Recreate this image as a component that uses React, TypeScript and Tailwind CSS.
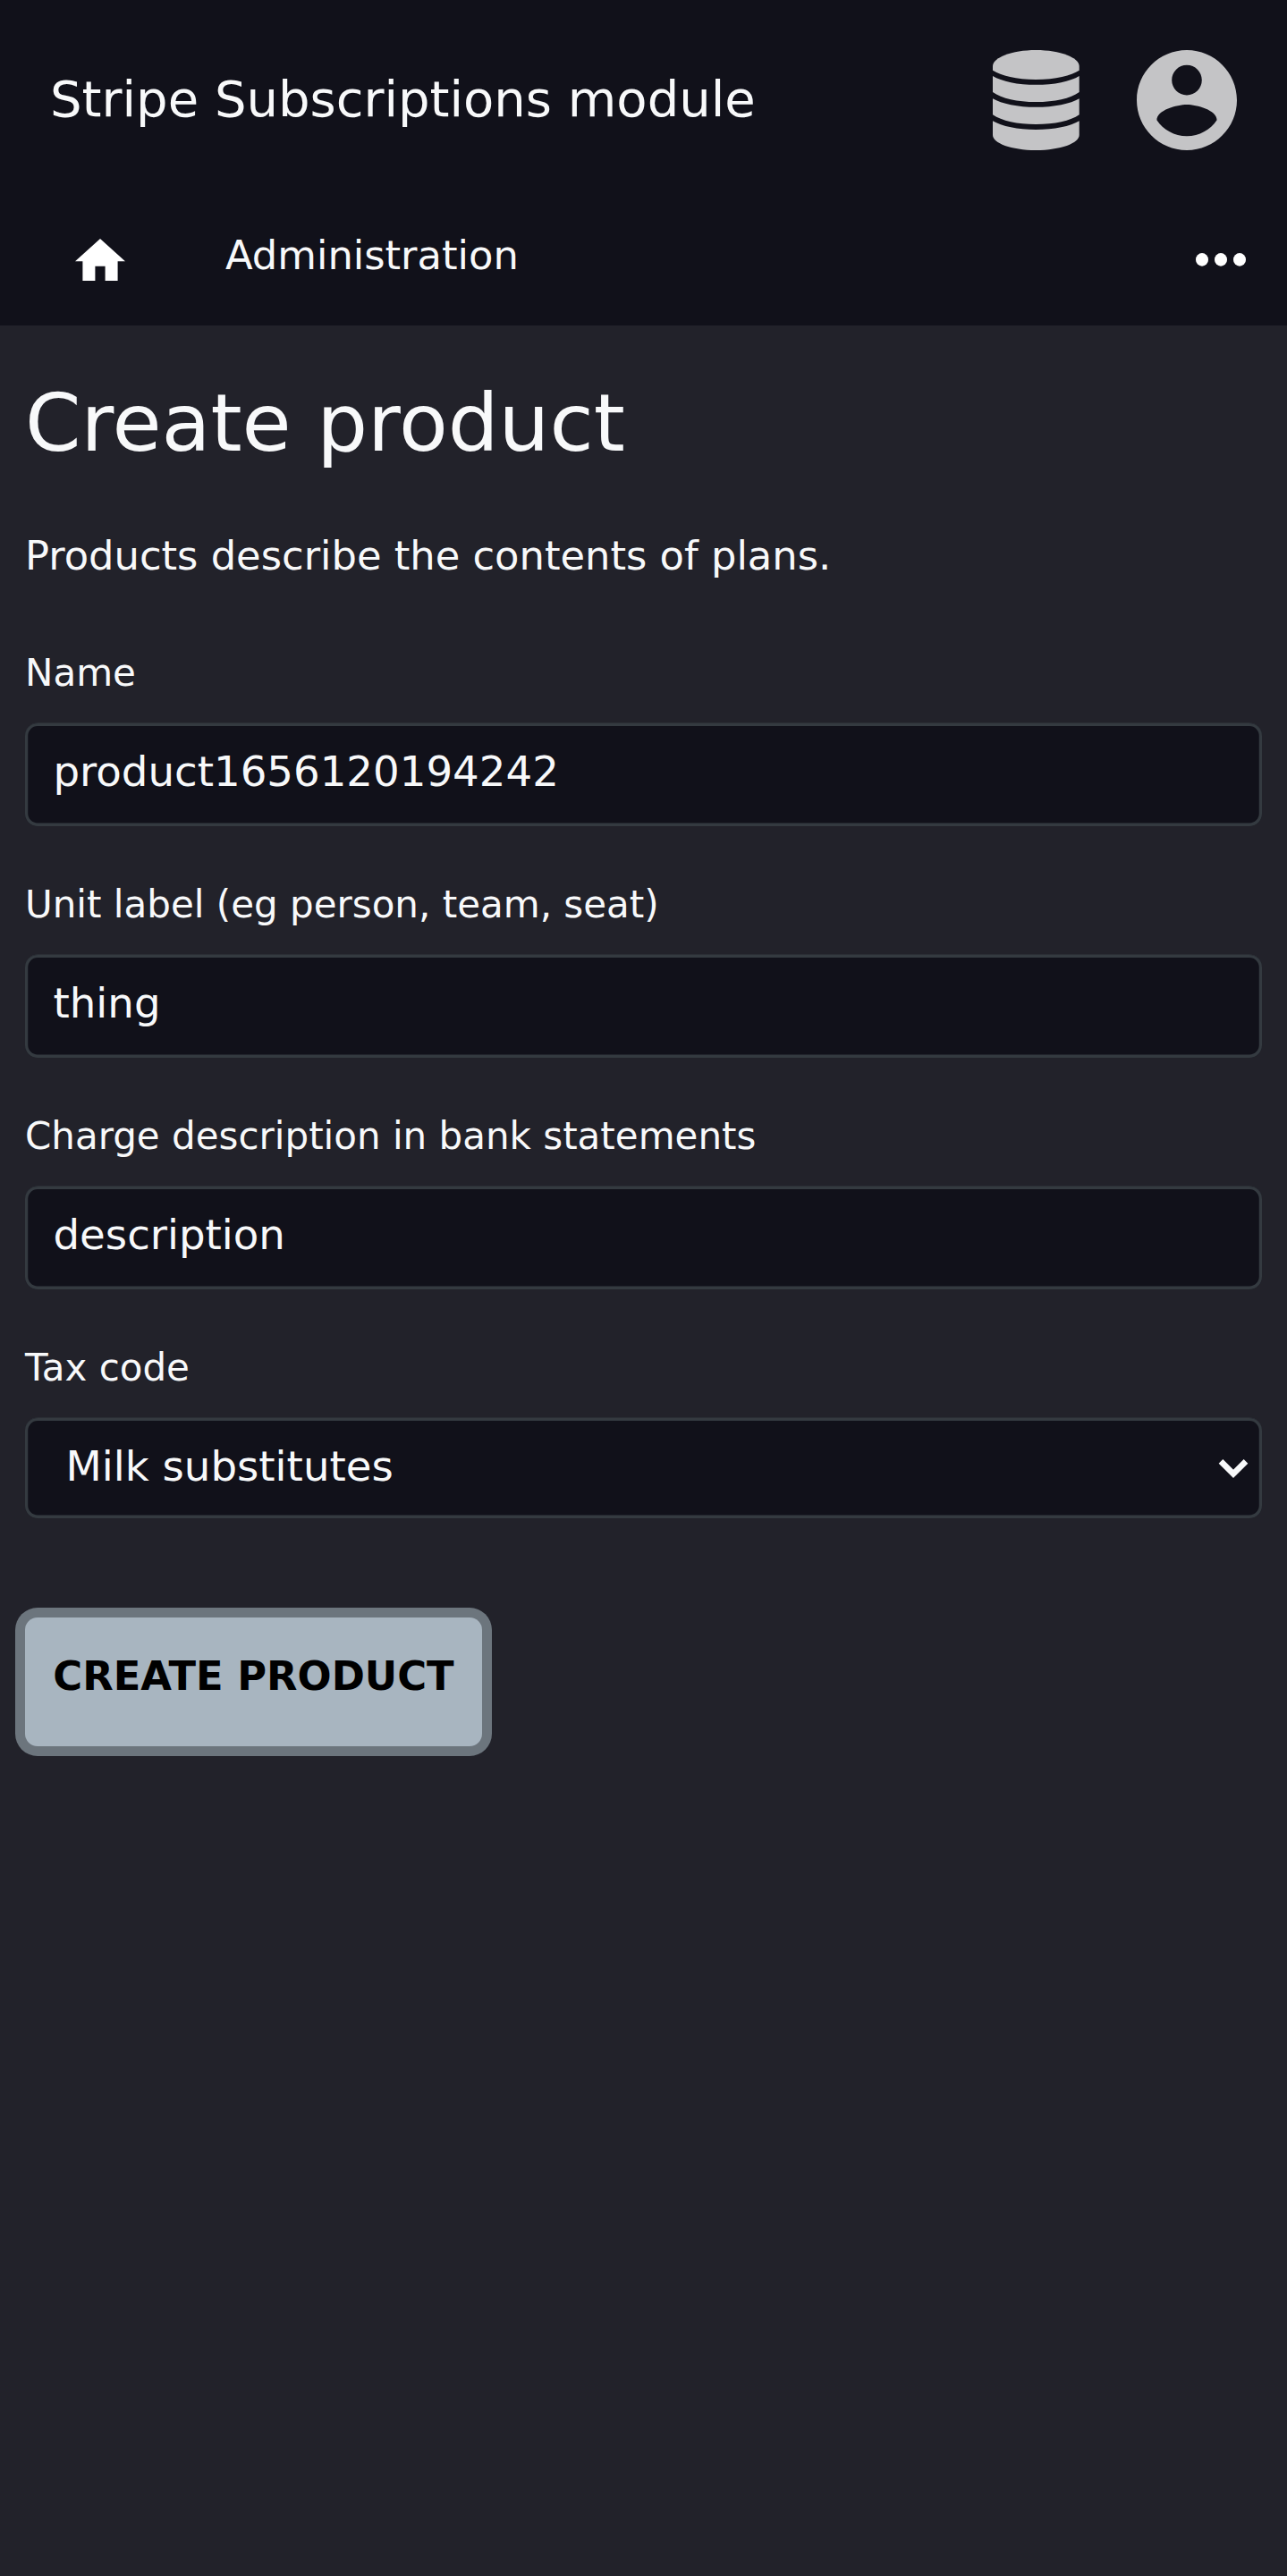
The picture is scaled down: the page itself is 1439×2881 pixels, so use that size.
import type { ReactNode } from 'react';

function DatabaseIcon() {
  return (
    <svg className="h-28 w-28 shrink-0" viewBox="0 0 112 112" fill="#c4c4c6">
      <path d="M8 18C8 8.500 29 0 56.300 0S104.700 8.500 104.700 18V22.700C96 28.500 78 33 56.300 33S17 28.500 8 22.700Z" />
      <path d="M8 28.900C18 35 36 38.800 56.300 38.800S95 35 104.700 28.900V46.900C95 54 77 58 56.300 58S18 54 8 46.900Z" />
      <path d="M8 54.200C18 60 36 63.800 56.300 63.800S95 60 104.700 54.200V72.200C95 79 77 83 56.300 83S18 79 8 72.200Z" />
      <path d="M8 79.200C18 85 36 89 56.300 89S95 85 104.700 79.200V95C104.700 104 84 112 56.300 112S8 104 8 95Z" />
    </svg>
  );
}

function AccountIcon() {
  return (
    <svg className="h-28 w-28 shrink-0" viewBox="2 2 20 20" fill="#c4c4c6">
      <path d="M12 2C6.480 2 2 6.480 2 12s4.480 10 10 10 10-4.480 10-10S17.520 2 12 2zm0 3c1.660 0 3 1.340 3 3s-1.340 3-3 3-3-1.340-3-3 1.340-3 3-3zm0 14.200c-2.500 0-4.710-1.280-6-3.220.030-1.990 4-3.080 6-3.080 1.990 0 5.970 1.090 6 3.080-1.290 1.940-3.500 3.220-6 3.220z" />
    </svg>
  );
}

function HomeIcon() {
  return (
    <svg className="h-[47.6px] w-14" viewBox="2 3 20 17" fill="#fff">
      <path d="M10 20v-6h4v6h5v-8h3L12 3 2 12h3v8z" />
    </svg>
  );
}

function MoreIcon() {
  return (
    <svg className="h-4 w-14" viewBox="0 0 56 16" fill="#fff">
      <ellipse cx="7" cy="8.4" rx="7" ry="7.3" />
      <ellipse cx="28" cy="8.4" rx="7" ry="7.3" />
      <ellipse cx="49" cy="8.4" rx="7" ry="7.3" />
    </svg>
  );
}

function Field({ label, children }: { label: string; children: ReactNode }) {
  return (
    <label className="block h-[259px]">
      <span className="block h-[83px] pt-0.5 text-[42px] leading-[49px]">{label}</span>
      {children}
    </label>
  );
}

function TextInput({ value }: { value: string }) {
  return (
    <input
      type="text"
      defaultValue={value}
      className="block h-[115px] w-full rounded-[14px] bg-[#11111a] pt-0 pr-7 pb-[7px] pl-[31.5px] text-[46.667px] shadow-[inset_0_-0.25px_0_3.25px_#343a40,0_-0.5px_0_0_#343a40] outline-none"
    />
  );
}

export default function App() {
  return (
    <div className="min-h-[2881px] w-full bg-[#22222a] font-['DejaVu_Sans',sans-serif] text-[#f8f9fa]">
      <header className="h-[364px] bg-[#11111a]">
        <div className="flex h-56 items-start justify-between pr-[56.5px] pl-14">
          <h1 className="text-[56px] leading-[221px]">Stripe Subscriptions module</h1>
          <div className="flex gap-[56.5px] pt-14">
            <DatabaseIcon />
            <AccountIcon />
          </div>
        </div>
        <nav className="flex h-35 items-start pr-[46px] pl-21">
          <a className="pt-[42.6px]">
            <HomeIcon />
          </a>
          <a className="ml-28 text-[44.8px] leading-[123px]">Administration</a>
          <button className="ml-auto pt-[58px]">
            <MoreIcon />
          </button>
        </nav>
      </header>
      <main className="px-7">
        <h2 className="h-[231px] pt-[57px] text-[89.6px] leading-[104px]">Create product</h2>
        <p className="h-[131px] text-[44.8px] leading-[53px]">Products describe the contents of plans.</p>
        <form>
          <Field label="Name">
            <TextInput value="product1656120194242" />
          </Field>
          <Field label="Unit label (eg person, team, seat)">
            <TextInput value="thing" />
          </Field>
          <Field label="Charge description in bank statements">
            <TextInput value="description" />
          </Field>
          <Field label="Tax code">
            <div className="relative">
              <select className="block h-[112px] w-full appearance-none rounded-[14px] bg-[#11111a] pr-7 pb-1 pl-[45.5px] text-[46.667px] shadow-[inset_0_-0.25px_0_3.25px_#343a40,0_-0.5px_0_0_#343a40] outline-none">
                <option>Milk substitutes</option>
              </select>
              <svg
                className="pointer-events-none absolute top-[45px] right-[15px] h-6 w-[34px]"
                viewBox="0 0 34 24"
                fill="none"
                stroke="#f8f9fa"
                strokeWidth="6.6"
              >
                <path d="M3 3.300L17 17.300L31 3.300" />
              </svg>
            </div>
          </Field>
          <button
            type="button"
            className="mt-[47px] flex h-36 w-[511px] items-start justify-center rounded-[14px] bg-[#a8b5c0] pt-[39px] text-[44.8px] leading-[53px] font-bold whitespace-nowrap text-black shadow-[0_0_0_11px_#6c757d]"
          >
            CREATE PRODUCT
          </button>
        </form>
      </main>
    </div>
  );
}
